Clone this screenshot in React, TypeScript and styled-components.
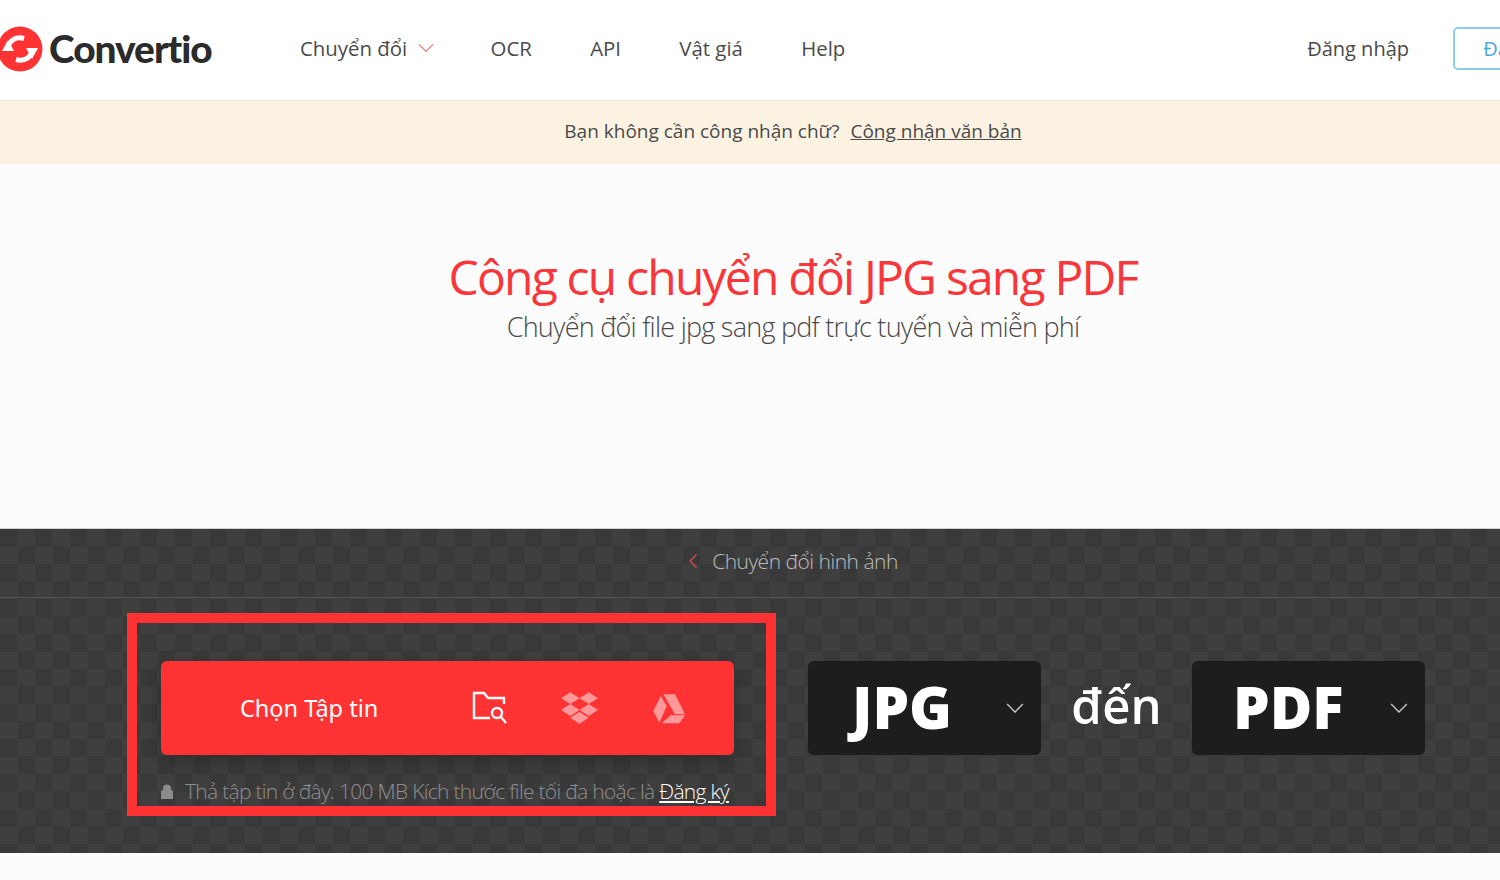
import styled, { createGlobalStyle } from "styled-components";
import { FaDropbox } from "react-icons/fa";

const GlobalStyle = createGlobalStyle`
  html, body {
    margin: 0;
    padding: 0;
    background: #fff;
    overflow: hidden;
  }
  body {
    font-family: "Open Sans", "Noto Sans", sans-serif;
  }
`;

const navItems = ["OCR", "API", "Vật giá", "Help"];

const LogoMark = () => (
  <svg width="46" height="46" viewBox="0 0 46 46" fill="none">
    <circle cx="23" cy="23" r="22.5" fill="#ff3333" />
    <polygon points="11,14 5,25 17,25" fill="#fff" />
    <path d="M11 24 C11 15 18 10 27 12.500" stroke="#fff" strokeWidth="5" />
    <polygon points="35,33 29,22 41,22" fill="#fff" />
    <path d="M35 23 C35 31 28 36 19 33.500" stroke="#fff" strokeWidth="5" />
  </svg>
);

const Chevron = ({ color, size = 16 }: { color: string; size?: number }) => (
  <svg width={size} height={size} viewBox="0 0 16 16" fill="none">
    <path d="M1 4.5 L8 11.5 L15 4.5" stroke={color} strokeWidth="1.2" />
  </svg>
);

const FolderSearch = () => (
  <svg width="36" height="34" viewBox="0 0 36 34" fill="none" stroke="#fff" strokeWidth="2.4">
    <path d="M18 27 H2 V2 H12 L16 7 H32 V13" />
    <circle cx="25" cy="22" r="5" />
    <path d="M29 26 L34 32" />
  </svg>
);

const Drive = () => (
  <svg width="34" height="31" viewBox="-2 0 34 31" fill="#fff" opacity="0.5">
    <polygon points="10.300,1.300 22,1.300 32,21.300 22,21.300" />
    <polygon points="7.700,3 13.700,13 6.300,29.700 0.300,18" />
    <polygon points="17.700,22.300 32,22.300 26.300,30.300 8.700,30.300" />
  </svg>
);

const App = () => {
  return (
    <Page>
      <GlobalStyle />
      <Header>
        <Logo>
          <LogoMark />
          <LogoText>Convertio</LogoText>
        </Logo>
        <Nav>
          <NavItem>
            Chuyển đổi
            <Chevron color="#f47b7b" />
          </NavItem>
          {navItems.map((n) => (
            <NavItem key={n}>{n}</NavItem>
          ))}
        </Nav>
        <Account>
          <LoginLink>Đăng nhập</LoginLink>
          <SignUp>Đăng ký</SignUp>
        </Account>
      </Header>
      <Notice>
        Bạn không cần công nhận chữ?
        <NoticeLink>Công nhận văn bản</NoticeLink>
      </Notice>
      <Hero>
        <Title>Công cụ chuyển đổi JPG sang PDF</Title>
        <Subtitle>Chuyển đổi file jpg sang pdf trực tuyến và miễn phí</Subtitle>
      </Hero>
      <Dark>
        <Crumb>
          <CrumbArrow>
            <svg width="10" height="16" viewBox="0 0 10 16" fill="none">
              <path d="M8.500 1.500 L2 8 L8.500 14.500" stroke="#e2474a" strokeWidth="1.3" />
            </svg>
          </CrumbArrow>
          Chuyển đổi hình ảnh
        </Crumb>
        <Converter>
          <Highlight />
          <UploadColumn>
            <UploadButton>
              <UploadLabel>Chọn Tập tin</UploadLabel>
              <UploadIcons>
                <FolderSearch />
                <DropboxIcon />
                <Drive />
              </UploadIcons>
            </UploadButton>
            <Hint>
              <svg width="12" height="15" viewBox="0 0 12 15">
                <path
                  d="M0 6.500 H2 V4 C2 1.500 3.800 0.500 6 0.500 C8.200 0.500 10 1.500 10 4 V6.500 H12 V15 H0 Z"
                  fill="#8c8c8c"
                />
              </svg>
              <HintText>
                Thả tập tin ở đây. 100 MB Kích thước file tối đa hoặc là <HintLink>Đăng ký</HintLink>
              </HintText>
            </Hint>
          </UploadColumn>
          <FormatSelect>
            <FormatName offset={44}>JPG</FormatName>
            <Chevron color="#c9c9c9" size={18} />
          </FormatSelect>
          <Joiner>đến</Joiner>
          <FormatSelect>
            <FormatName offset={41}>PDF</FormatName>
            <Chevron color="#c9c9c9" size={18} />
          </FormatSelect>
        </Converter>
      </Dark>
      <Bottom />
    </Page>
  );
};

const Page = styled.div`
  width: 1586px;
  height: 880px;
  overflow: hidden;
  display: flex;
  flex-direction: column;
`;
const Header = styled.header`
  box-sizing: border-box;
  height: 101px;
  padding: 0 0 4px;
  display: flex;
  align-items: center;
  background: #fff;
  border-bottom: 1px solid #f0e9dd;
`;
const Logo = styled.div`
  display: flex;
  align-items: center;
  gap: 6px;
  margin-left: -3px;
  width: 303px;
  svg {
    margin-top: 2px;
  }
`;
const LogoText = styled.span`
  font-family: "Lato", sans-serif;
  font-weight: 900;
  font-size: 38.800px;
  letter-spacing: -1px;
  color: #2b2b2b;
`;
const Nav = styled.nav`
  display: flex;
  align-items: center;
  gap: 58.300px;
  > :first-child {
    margin-right: -2px;
  }
`;
const NavItem = styled.span`
  display: flex;
  align-items: center;
  gap: 11px;
  font-size: 20.400px;
  color: #4a4a4a;
  white-space: nowrap;
`;
const LoginLink = styled(NavItem)`
  font-size: 20px;
`;
const Account = styled.div`
  margin-left: auto;
  display: flex;
  align-items: center;
  gap: 44px;
`;
const SignUp = styled.button`
  box-sizing: border-box;
  width: 135px;
  margin-right: -2px;
  height: 43px;
  border: 2px solid #8accec;
  border-radius: 5px;
  background: #fff;
  color: #4da9dd;
  font-family: inherit;
  font-size: 20px;
`;
const Notice = styled.div`
  box-sizing: border-box;
  height: 63px;
  padding-bottom: 4px;
  display: flex;
  align-items: center;
  justify-content: center;
  gap: 11px;
  background: #fcf2e2;
  font-size: 19px;
  color: #4a4a4a;
`;
const NoticeLink = styled.a`
  text-decoration: underline;
`;
const Hero = styled.section`
  height: 364px;
  padding-top: 83px;
  box-sizing: border-box;
  display: flex;
  flex-direction: column;
  align-items: center;
  background: #fcfcfc;
`;
const Title = styled.h1`
  margin: 0;
  font-size: 48px;
  line-height: 60px;
  font-weight: 400;
  letter-spacing: -1.8px;
  color: #f9363a;
`;
const Subtitle = styled.p`
  margin: 2px 0 0;
  font-size: 27px;
  line-height: 36px;
  font-weight: 300;
  letter-spacing: -0.75px;
  color: #4a4a4a;
`;
const Dark = styled.section`
  height: 325px;
  box-sizing: border-box;
  border-top: 1px solid #cfcfcf;
  background-color: #393939;
  background-image: repeating-conic-gradient(#3f3f3f 0 25%, #393939 0 50%);
  background-size: 35px 35px;
`;
const Crumb = styled.div`
  box-sizing: border-box;
  height: 69px;
  padding-bottom: 4px;
  display: flex;
  align-items: center;
  justify-content: center;
  gap: 14px;
  border-bottom: 1px solid #555;
  font-size: 21px;
  font-weight: 300;
  letter-spacing: -0.5px;
  color: #bdbdbd;
`;
const CrumbArrow = styled.span`
  display: flex;
`;
const Converter = styled.div`
  position: relative;
  padding: 63px 0 0 161px;
  display: flex;
  align-items: flex-start;
`;
const Highlight = styled.div`
  position: absolute;
  left: 127px;
  top: 15px;
  width: 649px;
  height: 203px;
  box-sizing: border-box;
  border: 10px solid #ff3333;
  pointer-events: none;
  z-index: 1;
`;
const UploadColumn = styled.div`
  width: 573px;
  margin-right: 74px;
`;
const UploadButton = styled.div`
  height: 94px;
  display: flex;
  align-items: center;
  border-radius: 6px;
  background: #ff3333;
  box-shadow: 0 8px 20px rgba(0, 0, 0, 0.22);
`;
const UploadLabel = styled.span`
  width: 311px;
  padding-left: 79px;
  box-sizing: border-box;
  font-size: 23.500px;
  font-family: "Noto Sans", sans-serif;
  color: #fff;
`;
const UploadIcons = styled.div`
  display: flex;
  align-items: center;
  gap: 53px;
`;
const DropboxIcon = styled(FaDropbox)`
  width: 37px;
  height: 36px;
  color: #fff;
  opacity: 0.5;
`;
const Hint = styled.div`
  margin-top: 22px;
  display: flex;
  align-items: center;
  gap: 12px;
`;
const HintText = styled.span`
  font-size: 21px;
  font-weight: 300;
  letter-spacing: -0.7px;
  color: #8f8f8f;
  white-space: nowrap;
`;
const HintLink = styled.a`
  color: #fff;
  text-decoration: underline;
`;
const FormatSelect = styled.div`
  box-sizing: border-box;
  width: 233px;
  height: 94px;
  padding-right: 17px;
  display: flex;
  align-items: center;
  justify-content: space-between;
  border-radius: 6px;
  background: #1d1d1d;
`;
const FormatName = styled.span<{ offset: number }>`
  margin-left: ${(p) => p.offset}px;
  margin-bottom: 4px;
  font-size: 58px;
  font-weight: 800;
  color: #fff;
`;
const Joiner = styled.span`
  box-sizing: border-box;
  width: 151px;
  height: 94px;
  padding-bottom: 6px;
  display: flex;
  align-items: center;
  justify-content: center;
  font-size: 49px;
  font-weight: 600;
  color: #fff;
`;
const Bottom = styled.div`
  flex: 1;
  background: #fcfcfc;
`;

export default App;
